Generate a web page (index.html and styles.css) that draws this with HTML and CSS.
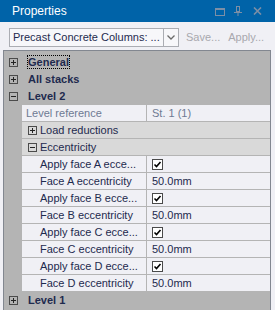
FILE: index.html
```html
<!DOCTYPE html>
<html lang="en">
<head>
    <meta charset="UTF-8">
    <meta name="viewport" content="width=device-width, initial-scale=1.0">
    <title>Properties</title>
    <link rel="stylesheet" href="styles.css">
</head>
<body>
    <div class="panel">
        <header class="titlebar">
            <span class="title">Properties</span>
            <svg class="ico ico-window" width="10" height="8" viewBox="0 0 10 8">
                <rect x="0.5" y="0.5" width="9" height="7" fill="none" stroke="currentColor"/>
                <rect x="0" y="0" width="10" height="2" fill="currentColor"/>
            </svg>
            <svg class="ico ico-pin" width="8" height="10" viewBox="0 0 8 10">
                <rect x="2.5" y="0.5" width="3" height="5" fill="none" stroke="currentColor"/>
                <rect x="5" y="1" width="1" height="5" fill="currentColor"/>
                <rect x="0" y="6" width="8" height="1" fill="currentColor"/>
                <rect x="3.5" y="7" width="1" height="3" fill="currentColor"/>
            </svg>
            <svg class="ico ico-close" width="9" height="8" viewBox="0 0 9 8">
                <path d="M1 0.5 L8 7.5 M8 0.5 L1 7.5" stroke="currentColor" stroke-width="1.6" fill="none"/>
            </svg>
        </header>

        <div class="toolbar">
            <div class="combo">
                <span class="combo-text">Precast Concrete Columns: ...</span>
                <span class="combo-arrow">
                    <svg width="8" height="5" viewBox="0 0 8 5">
                        <path d="M0.5 0.5 L4 4 L7.5 0.5" stroke="#6b6b6b" stroke-width="1.3" fill="none"/>
                    </svg>
                </span>
            </div>
            <span class="tool-btn">Save...</span>
            <span class="tool-btn">Apply...</span>
        </div>

        <div class="grid">
            <div class="row category">
                <svg class="expander" width="9" height="9" viewBox="0 0 9 9"><rect x="0.5" y="0.5" width="8" height="8" fill="none" stroke="#4b4b4b"/><path d="M2 4.5 H7 M4.5 2 V7" stroke="#222"/></svg>
                <span class="cat-label focused">General</span>
            </div>
            <div class="row category">
                <svg class="expander" width="9" height="9" viewBox="0 0 9 9"><rect x="0.5" y="0.5" width="8" height="8" fill="none" stroke="#4b4b4b"/><path d="M2 4.5 H7 M4.5 2 V7" stroke="#222"/></svg>
                <span class="cat-label">All stacks</span>
            </div>
            <div class="row category">
                <svg class="expander" width="9" height="9" viewBox="0 0 9 9"><rect x="0.5" y="0.5" width="8" height="8" fill="none" stroke="#4b4b4b"/><path d="M2 4.5 H7" stroke="#222"/></svg>
                <span class="cat-label">Level 2</span>
            </div>

            <div class="row prop">
                <span class="name readonly">Level reference</span>
                <span class="value readonly">St. 1 (1)</span>
            </div>

            <div class="row prop">
                <div class="sub">
                    <svg class="expander" width="9" height="9" viewBox="0 0 9 9"><rect x="0.5" y="0.5" width="8" height="8" fill="none" stroke="#4b4b4b"/><path d="M2 4.5 H7 M4.5 2 V7" stroke="#222"/></svg>
                    <span class="sub-label">Load reductions</span>
                </div>
            </div>
            <div class="row prop">
                <div class="sub">
                    <svg class="expander" width="9" height="9" viewBox="0 0 9 9"><rect x="0.5" y="0.5" width="8" height="8" fill="none" stroke="#4b4b4b"/><path d="M2 4.5 H7" stroke="#222"/></svg>
                    <span class="sub-label">Eccentricity</span>
                </div>
            </div>

            <div class="row prop">
                <span class="name nested">Apply face A ecce...</span>
                <span class="value"><svg class="check" width="11" height="11" viewBox="0 0 11 11"><rect x="0.5" y="0.5" width="10" height="10" fill="#fff" stroke="#4a4a4a"/><path d="M2.5 5.5 L4.5 7.5 L8.5 3" stroke="#000" stroke-width="1.6" fill="none"/></svg></span>
            </div>
            <div class="row prop">
                <span class="name nested">Face A eccentricity</span>
                <span class="value">50.0mm</span>
            </div>
            <div class="row prop">
                <span class="name nested">Apply face B ecce...</span>
                <span class="value"><svg class="check" width="11" height="11" viewBox="0 0 11 11"><rect x="0.5" y="0.5" width="10" height="10" fill="#fff" stroke="#4a4a4a"/><path d="M2.5 5.5 L4.5 7.5 L8.5 3" stroke="#000" stroke-width="1.6" fill="none"/></svg></span>
            </div>
            <div class="row prop">
                <span class="name nested">Face B eccentricity</span>
                <span class="value">50.0mm</span>
            </div>
            <div class="row prop">
                <span class="name nested">Apply face C ecce...</span>
                <span class="value"><svg class="check" width="11" height="11" viewBox="0 0 11 11"><rect x="0.5" y="0.5" width="10" height="10" fill="#fff" stroke="#4a4a4a"/><path d="M2.5 5.5 L4.5 7.5 L8.5 3" stroke="#000" stroke-width="1.6" fill="none"/></svg></span>
            </div>
            <div class="row prop">
                <span class="name nested">Face C eccentricity</span>
                <span class="value">50.0mm</span>
            </div>
            <div class="row prop">
                <span class="name nested">Apply face D ecce...</span>
                <span class="value"><svg class="check" width="11" height="11" viewBox="0 0 11 11"><rect x="0.5" y="0.5" width="10" height="10" fill="#fff" stroke="#4a4a4a"/><path d="M2.5 5.5 L4.5 7.5 L8.5 3" stroke="#000" stroke-width="1.6" fill="none"/></svg></span>
            </div>
            <div class="row prop">
                <span class="name nested">Face D eccentricity</span>
                <span class="value">50.0mm</span>
            </div>

            <div class="row category">
                <svg class="expander" width="9" height="9" viewBox="0 0 9 9"><rect x="0.5" y="0.5" width="8" height="8" fill="none" stroke="#4b4b4b"/><path d="M2 4.5 H7 M4.5 2 V7" stroke="#222"/></svg>
                <span class="cat-label">Level 1</span>
            </div>
        </div>
    </div>
</body>
</html>
```

FILE: styles.css
```css
* {
    box-sizing: border-box;
}

body {
    margin: 0;
    font-family: "Liberation Sans", Arial, sans-serif;
    font-size: 11px;
    background-color: #f0f0f5;
    overflow: hidden;
}

.panel {
    width: 275px;
    height: 310px;
    background-color: #f0f0f5;
    overflow: hidden;
}

/* title bar */
.titlebar {
    height: 22px;
    background-color: #0063a8;
    color: white;
    display: flex;
    align-items: center;
    padding: 0 13px 0 12px;
}

.title {
    flex: 1;
    font-size: 12px;
}

.ico {
    color: #7c8fa6;
    display: block;
}

.ico-window {
    margin-top: 1px;
}

.ico-pin {
    margin-left: 9px;
}

.ico-close {
    margin-left: 11px;
}

/* toolbar */
.toolbar {
    height: 28px;
    display: flex;
    align-items: flex-start;
    padding: 6px 0 0 9px;
}

.combo {
    width: 170px;
    height: 19px;
    display: flex;
    border: 1px solid #abadb3;
    background-color: #f7f7fa;
}

.combo-text {
    flex: 1;
    padding-left: 3px;
    line-height: 17px;
    color: #1e2a4e;
    white-space: nowrap;
}

.combo-arrow {
    width: 15px;
    border-left: 1px solid #abadb3;
    display: flex;
    align-items: center;
    justify-content: center;
}

.combo-arrow svg {
    display: block;
}

.tool-btn {
    color: #a8a8ae;
    line-height: 19px;
    margin-left: 7px;
}

.tool-btn + .tool-btn {
    margin-left: 8px;
}

/* property grid */
.grid {
    margin-left: 3px;
    width: 268px;
    height: 260px;
    border: 1px solid #828790;
    border-bottom: none;
    background-color: #b4b4b4;
    padding-top: 3px;
    display: flex;
    flex-direction: column;
    gap: 1px;
}

.row {
    height: 16px;
    flex-shrink: 0;
    display: flex;
    align-items: center;
}

.expander {
    display: block;
    flex-shrink: 0;
}

.category {
    padding-left: 5px;
}

.cat-label {
    margin-left: 10px;
    font-weight: bold;
    color: #1e2a4e;
    line-height: 12px;
}

.cat-label.focused {
    outline: 1px dotted #000;
}

.prop {
    padding-left: 18px;
}

.name,
.value {
    height: 16px;
    line-height: 16px;
    background-color: #f0f0f5;
    color: #1e2a4e;
    white-space: nowrap;
}

.name {
    width: 124px;
    padding-left: 4px;
}

.name.nested {
    padding-left: 18px;
}

.value {
    flex: 1;
    margin-left: 1px;
    padding-left: 5px;
    display: flex;
    align-items: center;
}

.readonly {
    color: #6e7a93;
}

.check {
    display: block;
}

.sub {
    flex: 1;
    height: 16px;
    background-color: #d9d9d9;
    padding-left: 6px;
    display: flex;
    align-items: center;
}

.sub-label {
    margin-left: 3px;
    color: #1e2a4e;
}
```
